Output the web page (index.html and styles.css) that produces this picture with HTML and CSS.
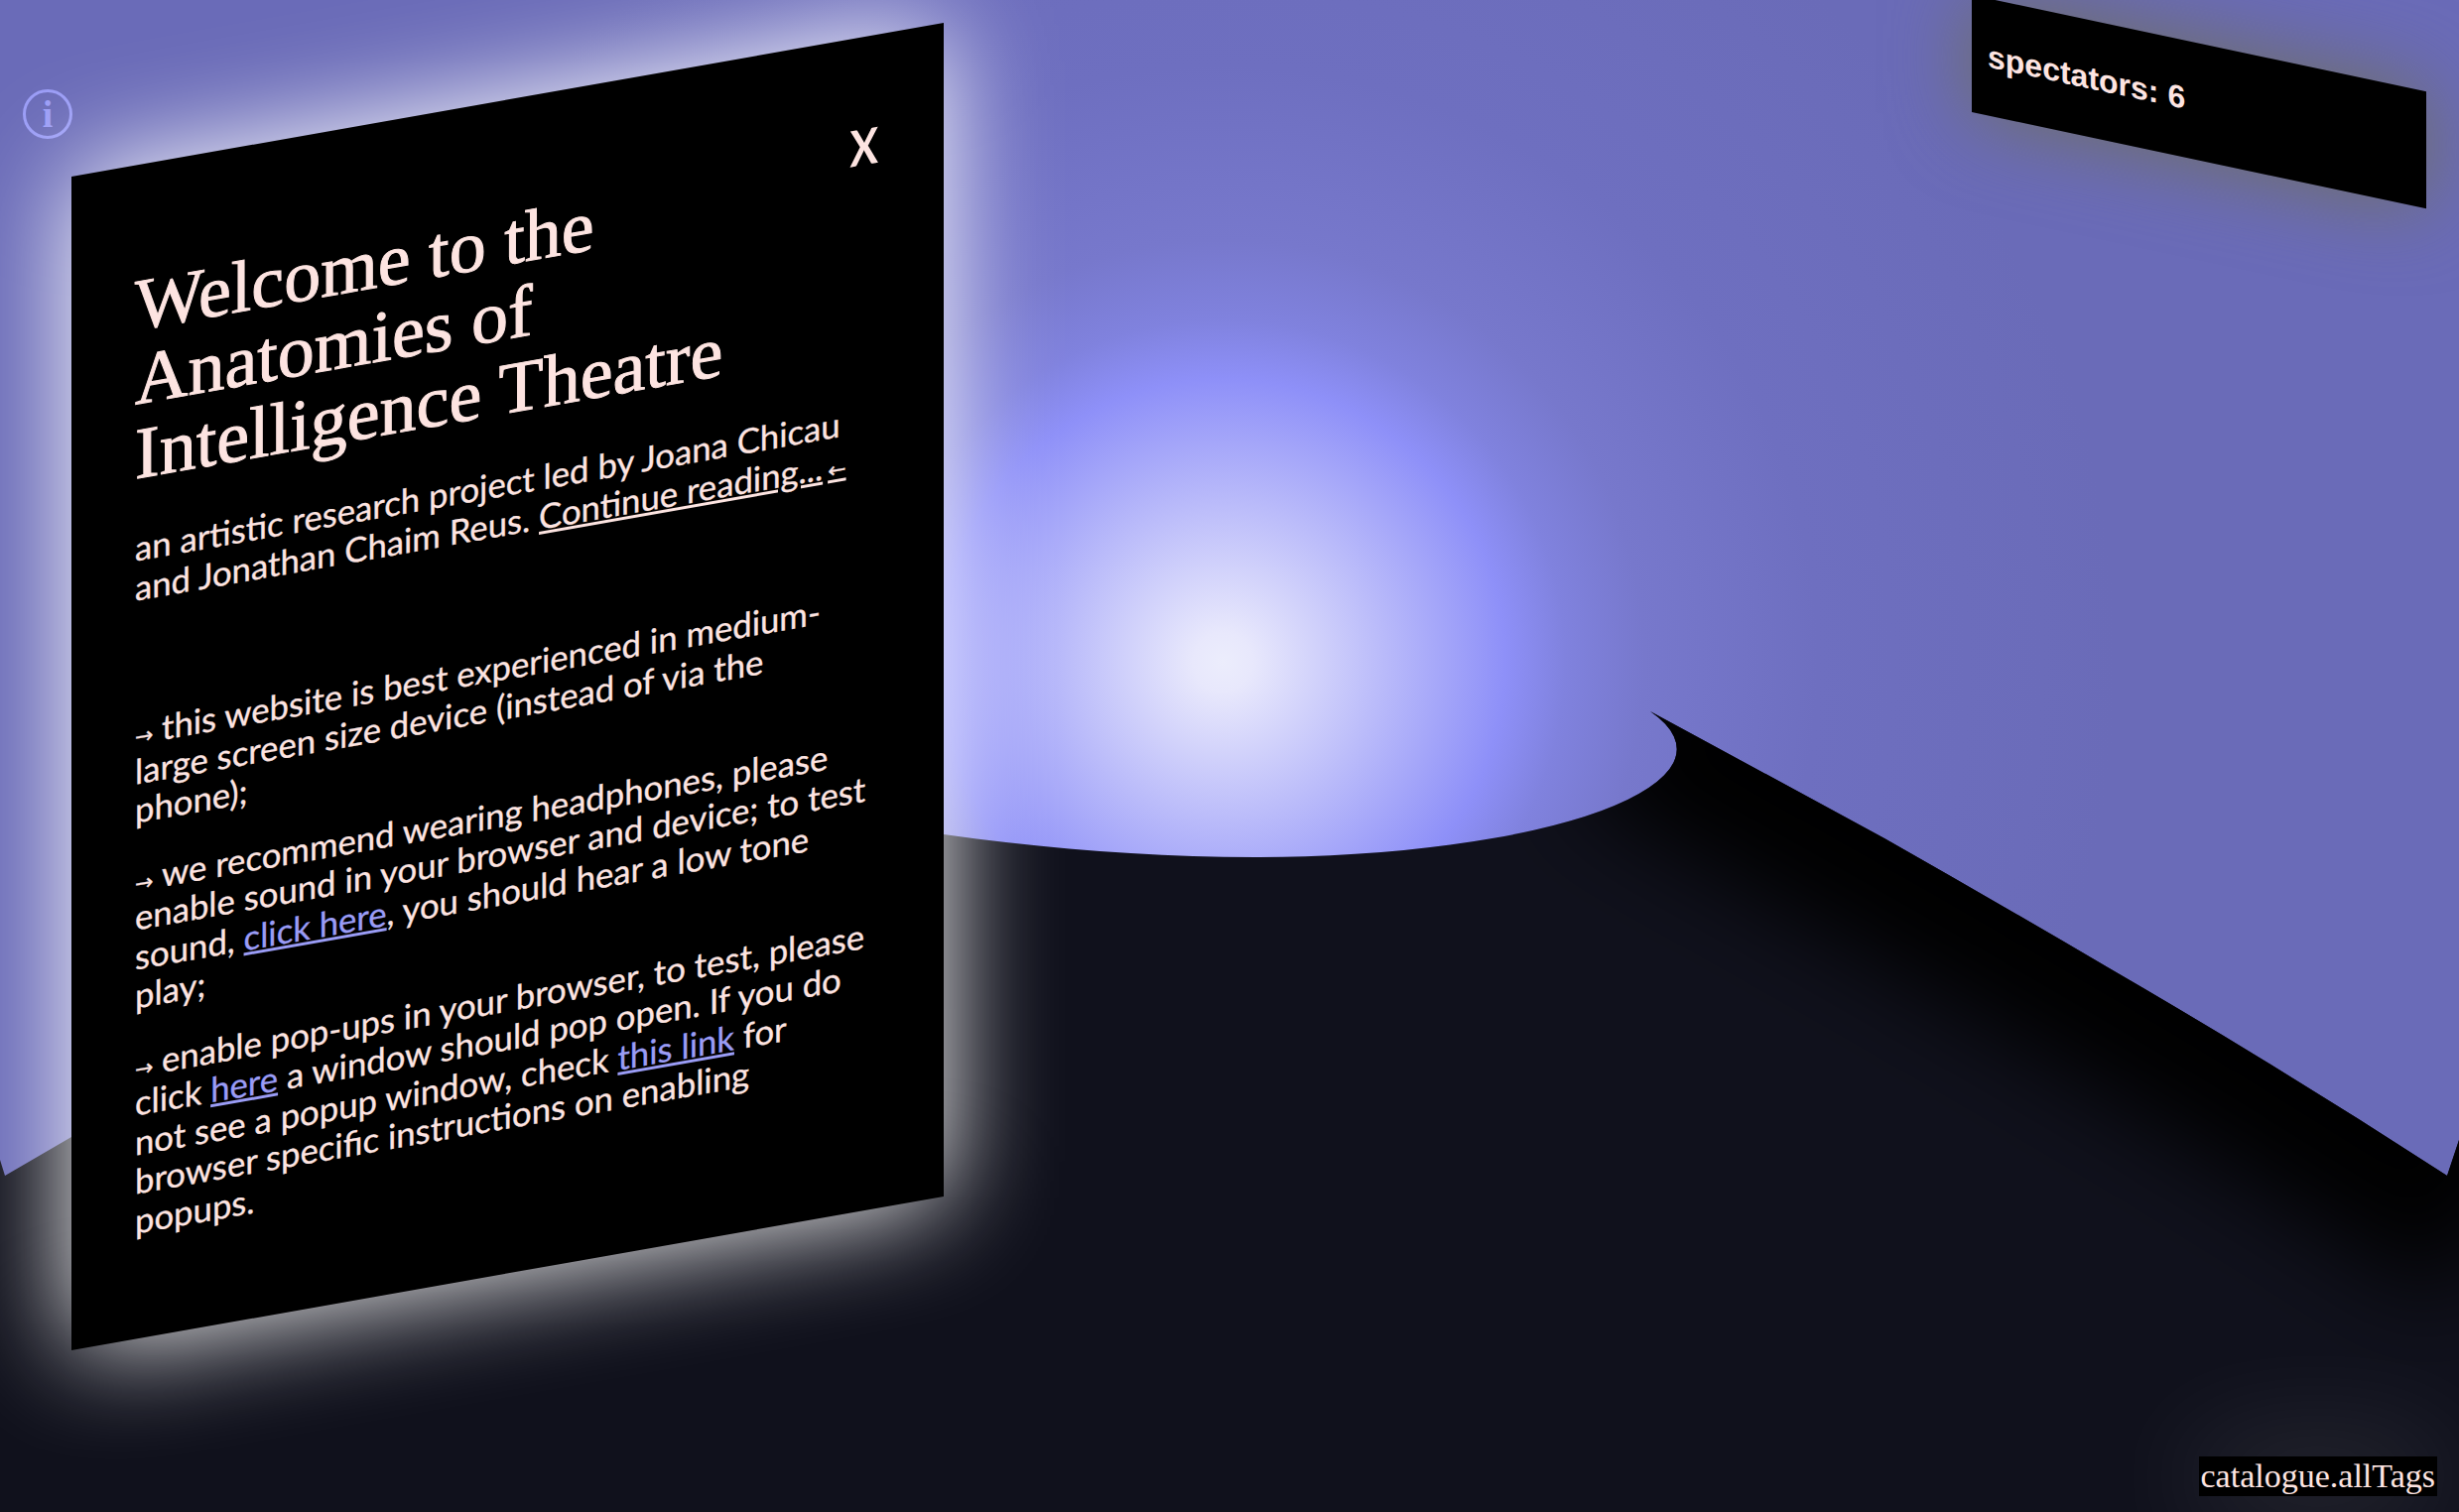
FILE: index.html
```html
<!DOCTYPE html>
<html lang="en">

<head>
    <meta charset="UTF-8">
    <meta name="viewport" content="width=device-width, initial-scale=1.0">
    <title>Anatomies of Intelligence Theatre</title>
    <link rel="stylesheet" href="styles.css">
</head>

<body>
    <!-- stage floor, drawn over the light -->
    <svg class="floor" viewBox="0 0 2478 1524" aria-hidden="true">
        <defs>
            <clipPath id="floor-clip">
                <path d="M0 1169 L5 1185 L72 1146 L400 950 L951 841 C1050 855 1160 864 1264 864 A426 109 0 0 0 1663 717 L1899 845 Q2010 908 2124 975 Q2300 1077 2466 1185 L2478 1149 L2478 1524 L0 1524 Z" />
            </clipPath>
            <filter id="soft" x="-30%" y="-30%" width="160%" height="160%">
                <feGaussianBlur stdDeviation="48" />
            </filter>
        </defs>
        <g clip-path="url(#floor-clip)">
            <rect width="2478" height="1524" fill="#10111c" />
            <path d="M1640 700 L1899 845 Q2010 908 2124 975 Q2300 1077 2520 1220" fill="none" stroke="#000" stroke-width="220" filter="url(#soft)" />
        </g>
    </svg>

    <a class="info-btn" href="#">i</a>

    <div class="welcome">
        <a class="close-btn" href="#">X</a>
        <h1>Welcome to the<br>Anatomies of<br>Intelligence Theatre</h1>
        <p class="intro">an artistic research project led by Joana Chicau<br>and Jonathan Chaim Reus. <a class="plain" href="#">Continue reading...<span class="arrow back">←</span></a></p>
        <p class="note"><span class="arrow lead">→</span>this website is best experienced in medium-<br>large screen size device (instead of via the<br>phone);</p>
        <p class="note"><span class="arrow lead">→</span>we recommend wearing headphones, please<br>enable sound in your browser and device; to test<br>sound, <a href="#">click here</a>, you should hear a low tone<br>play;</p>
        <p class="note"><span class="arrow lead">→</span>enable pop-ups in your browser, to test, please<br>click <a href="#">here</a> a window should pop open. If you do<br>not see a popup window, check <a href="#">this link</a> for<br>browser specific instructions on enabling<br>popups.</p>
    </div>

    <div class="spectators">spectators: 6</div>

    <a class="catalogue" href="#">catalogue.allTags</a>
</body>

</html>
```

FILE: styles.css
```css
body {
    margin: 0;
    width: 2478px;
    height: 1524px;
    position: relative;
    overflow: hidden;
    font-family: Lato, "Open Sans", sans-serif;
    color: #fde4e1;
    background: radial-gradient(circle at 1232px 667px, #ecedfc 0, #e8e8fc 30px, #8e90f8 285px, #8082de 345px, #7778cc 425px, #6e6fc0 600px, #6a6bb8 900px);
}

a {
    color: #9a9cf6;
}

.floor {
    position: absolute;
    top: 0;
    left: 0;
    width: 2478px;
    height: 1524px;
}

/* info icon */
.info-btn {
    position: absolute;
    left: 23px;
    top: 90px;
    width: 44px;
    height: 44px;
    border: 3px solid #9a9cf6;
    border-radius: 50%;
    text-align: center;
    font-family: "Liberation Serif", serif;
    font-weight: bold;
    font-size: 38px;
    line-height: 44px;
    text-decoration: none;
}

/* welcome panel */
.welcome {
    position: absolute;
    left: 72px;
    top: 178px;
    width: 879px;
    height: 1183px;
    box-sizing: border-box;
    padding: 104px 64px 0;
    background: #000;
    box-shadow: 0 0 110px #fff;
    transform: skewY(-10deg);
    transform-origin: 0 0;
}

.welcome h1 {
    margin: 0;
    font-family: "Liberation Serif", serif;
    font-weight: normal;
    font-size: 74px;
    line-height: 75px;
    -webkit-text-stroke: 1px #fde4e1;
}

.close-btn {
    position: absolute;
    top: 80px;
    right: 63px;
    color: #fde4e1;
    font-size: 50px;
    font-weight: bold;
    line-height: 60px;
    text-decoration: none;
    transform: scaleX(0.85);
}

.intro,
.note {
    margin: 0;
    font-size: 34.7px;
    line-height: 39.5px;
    -webkit-text-stroke: 0.3px;
}

.intro {
    margin-top: 37px;
    margin-bottom: 106px;
}

.note {
    margin-bottom: 29px;
}

.plain {
    color: #fde4e1;
}

.arrow {
    font-family: "DejaVu Sans", sans-serif;
    font-size: 22px;
    line-height: 0;
}

.back {
    padding-left: 5px;
}

.lead {
    display: inline-block;
    width: 27px;
}

/* spectators counter */
.spectators {
    position: absolute;
    left: 1987px;
    top: -5px;
    width: 458px;
    height: 118px;
    box-sizing: border-box;
    padding: 40px 16px 0;
    background: #000;
    box-shadow: 0 0 80px #6f6f60;
    font-family: "Liberation Sans", Arial, sans-serif;
    font-weight: bold;
    font-size: 32px;
    transform: skewY(12deg);
    transform-origin: 0 0;
}

.catalogue {
    position: absolute;
    right: 22px;
    bottom: 16px;
    height: 40px;
    padding: 0 2px;
    background: #000;
    box-shadow: 0 0 120px rgba(255, 255, 255, 0.22);
    color: #fde4e1;
    font-family: "Liberation Serif", serif;
    font-size: 34px;
    line-height: 40px;
    text-decoration: none;
}
```
